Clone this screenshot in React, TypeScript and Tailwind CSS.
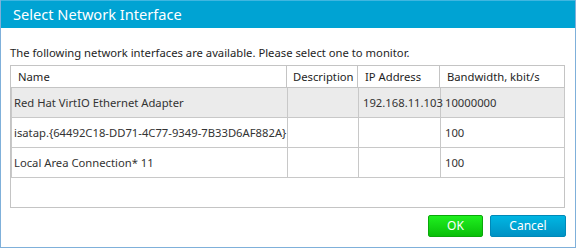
import React from "react";

const rows = [
  { name: "Red Hat VirtIO Ethernet Adapter", desc: "", ip: "192.168.11.103", bw: "10000000", sel: true },
  { name: "isatap.{64492C18-DD71-4C77-9349-7B33D6AF882A}", desc: "", ip: "", bw: "100", sel: false },
  { name: "Local Area Connection* 11", desc: "", ip: "", bw: "100", sel: false },
];

export default function App() {
  return (
    <div
      className="w-[576px] h-[248px] flex flex-col bg-white border-x border-b border-[#7fb0da] overflow-hidden"
      style={{ fontFamily: '"Noto Sans", "Open Sans", sans-serif' }}
    >
      <div className="h-[28px] shrink-0 bg-[#00a3d3] border-t border-[#3fb6e0] flex items-center pl-[12px] text-white text-[14.6px] leading-none">
        Select Network Interface
      </div>
      <div className="flex-1 flex flex-col pl-[9px] pr-[9px]">
        <div className="h-[37px] flex items-end pb-[7px] text-[11.25px] leading-none text-[#1e1e1e]">
          The following network interfaces are available. Please select one to monitor.
        </div>
        <div className="w-[555px] h-[143px] border border-[#c4c4c4] flex flex-col text-[11.25px] leading-none text-[#333]">
          <div className="grid grid-cols-[276px_71px_82px_124px] h-[22px] border-b border-[#c4c4c4] text-[#1e1e1e]">
            <div className="flex items-center pl-[7px] border-r border-[#c4c4c4]">Name</div>
            <div className="flex items-center pl-[6px] border-r border-[#c4c4c4]">Description</div>
            <div className="flex items-center pl-[7px] border-r border-[#c4c4c4]">IP Address</div>
            <div className="flex items-center pl-[7px]">Bandwidth, kbit/s</div>
          </div>
          {rows.map((r, i) => (
            <div
              key={i}
              className={
                "grid grid-cols-[276px_71px_82px_123px] h-[30px] border-b border-l border-r border-[#c8c8c8] w-[554px] " +
                (r.sel ? "bg-[#ebebeb]" : "bg-white")
              }
            >
              <div className="flex items-center pl-[2px] border-r border-[#c8c8c8] whitespace-nowrap overflow-hidden">{r.name}</div>
              <div className="flex items-center border-r border-[#c8c8c8]">{r.desc}</div>
              <div className="flex items-center pl-[4px] border-r border-[#c8c8c8] whitespace-nowrap">{r.ip}</div>
              <div className="flex items-center pl-[4px]">{r.bw}</div>
            </div>
          ))}
        </div>
        <div className="flex justify-end gap-[7px] mt-[7px] w-[556px]">
          <button className="w-[55px] h-[22px] rounded-[2px] border border-[#0aa80a] bg-gradient-to-b from-[#1ff01f] to-[#08bf08] text-white text-[12px] leading-none">
            OK
          </button>
          <button className="w-[76px] h-[22px] rounded-[2px] border border-[#0089b8] bg-gradient-to-b from-[#00b6e3] to-[#0092c4] text-white text-[12px] leading-none">
            Cancel
          </button>
        </div>
      </div>
    </div>
  );
}
